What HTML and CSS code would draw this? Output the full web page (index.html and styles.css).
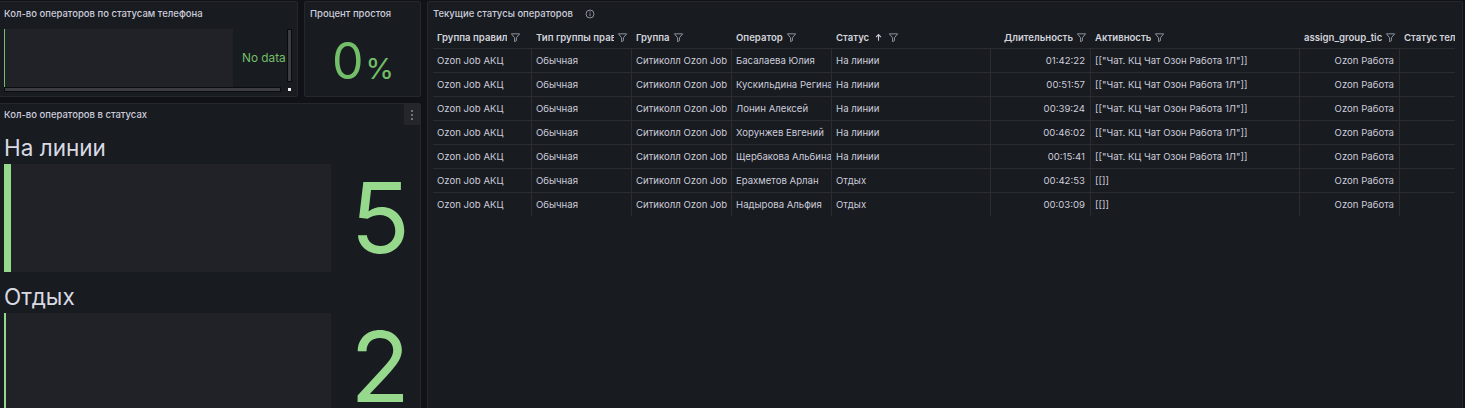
FILE: index.html
```html
<!DOCTYPE html>
<html lang="ru">
<head>
<meta charset="utf-8">
<title>Dashboard</title>
<link rel="stylesheet" href="styles.css">
</head>
<body>
<div class="dashboard">
  <div class="left-col">
    <div class="top-row">
      <section class="panel panel-phone">
        <header class="panel-header"><h2 class="panel-title">Кол-во операторов по статусам телефона</h2></header>
        <div class="scroll-box">
          <div class="scroll-content">
            <div class="mini-bar"></div>
            <span class="no-data">No data</span>
          </div>
          <div class="vscroll"></div>
          <div class="hscroll"></div>
          <div class="corner"></div>
        </div>
      </section>
      <section class="panel panel-idle">
        <header class="panel-header"><h2 class="panel-title">Процент простоя</h2></header>
        <div class="stat"><span class="stat-num">0</span><span class="stat-unit">%</span></div>
      </section>
    </div>
    <section class="panel panel-statuses">
      <header class="panel-header"><h2 class="panel-title">Кол-во операторов в статусах</h2></header>
      <button class="menu-btn" type="button" aria-label="Меню">
        <svg width="4" height="12" viewBox="0 0 4 12"><circle cx="2" cy="2" r="1" fill="#8e8e9e"/><circle cx="2" cy="6" r="1" fill="#8e8e9e"/><circle cx="2" cy="10" r="1" fill="#8e8e9e"/></svg>
      </button>
      <div class="gauges">
        <div class="gauge">
          <div class="gauge-label">На линии</div>
          <div class="gauge-row">
            <div class="gauge-bar"><div class="gauge-fill" style="width:7px"></div></div>
            <div class="gauge-value">5</div>
          </div>
        </div>
        <div class="gauge">
          <div class="gauge-label">Отдых</div>
          <div class="gauge-row">
            <div class="gauge-bar"><div class="gauge-fill" style="width:2px"></div></div>
            <div class="gauge-value">2</div>
          </div>
        </div>
      </div>
    </section>
  </div>

  <section class="panel panel-table">
    <header class="panel-header">
      <h2 class="panel-title">Текущие статусы операторов</h2>
      <svg class="info-icon" width="10" height="10" viewBox="0 0 10 10"><circle cx="5" cy="5" r="4" fill="none" stroke="#8e8e9e" stroke-width="1"/><line x1="5" y1="4.3" x2="5" y2="7.2" stroke="#8e8e9e" stroke-width="1"/><circle cx="5" cy="2.9" r="0.6" fill="#8e8e9e"/></svg>
    </header>
    <div class="table-wrap">
      <div class="table">
        <div class="thead">
          <div class="th"><span class="th-text">Группа правил</span><svg class="filter" viewBox="0 0 12 12"><path d="M1.5 2h9L7 6.3v3.2l-2 1V6.3z"/></svg></div>
          <div class="th"><span class="th-text">Тип группы правил</span><svg class="filter" viewBox="0 0 12 12"><path d="M1.5 2h9L7 6.3v3.2l-2 1V6.3z"/></svg></div>
          <div class="th"><span class="th-text">Группа</span><svg class="filter" viewBox="0 0 12 12"><path d="M1.5 2h9L7 6.3v3.2l-2 1V6.3z"/></svg></div>
          <div class="th"><span class="th-text">Оператор</span><svg class="filter" viewBox="0 0 12 12"><path d="M1.5 2h9L7 6.3v3.2l-2 1V6.3z"/></svg></div>
          <div class="th"><span class="th-text">Статус</span><svg class="sort" viewBox="0 0 10 10"><path d="M5 8.5V2M2.3 4.5L5 1.8l2.7 2.7"/></svg><svg class="filter" viewBox="0 0 12 12"><path d="M1.5 2h9L7 6.3v3.2l-2 1V6.3z"/></svg></div>
          <div class="th th-right"><span class="th-text">Длительность</span><svg class="filter" viewBox="0 0 12 12"><path d="M1.5 2h9L7 6.3v3.2l-2 1V6.3z"/></svg></div>
          <div class="th"><span class="th-text">Активность</span><svg class="filter" viewBox="0 0 12 12"><path d="M1.5 2h9L7 6.3v3.2l-2 1V6.3z"/></svg></div>
          <div class="th"><span class="th-text">assign_group_ticket</span><svg class="filter" viewBox="0 0 12 12"><path d="M1.5 2h9L7 6.3v3.2l-2 1V6.3z"/></svg></div>
          <div class="th"><span class="th-text">Статус телефона</span></div>
        </div>

        <div class="tr"><div class="td">Ozon Job АКЦ</div><div class="td">Обычная</div><div class="td">Ситиколл Ozon Job</div><div class="td">Басалаева Юлия</div><div class="td">На линии</div><div class="td td-right">01:42:22</div><div class="td">[["Чат. КЦ Чат Озон Работа 1Л"]]</div><div class="td td-right">Ozon Работа</div><div class="td"></div></div>
        <div class="tr"><div class="td">Ozon Job АКЦ</div><div class="td">Обычная</div><div class="td">Ситиколл Ozon Job</div><div class="td">Кускильдина Регина</div><div class="td">На линии</div><div class="td td-right">00:51:57</div><div class="td">[["Чат. КЦ Чат Озон Работа 1Л"]]</div><div class="td td-right">Ozon Работа</div><div class="td"></div></div>
        <div class="tr"><div class="td">Ozon Job АКЦ</div><div class="td">Обычная</div><div class="td">Ситиколл Ozon Job</div><div class="td">Лонин Алексей</div><div class="td">На линии</div><div class="td td-right">00:39:24</div><div class="td">[["Чат. КЦ Чат Озон Работа 1Л"]]</div><div class="td td-right">Ozon Работа</div><div class="td"></div></div>
        <div class="tr"><div class="td">Ozon Job АКЦ</div><div class="td">Обычная</div><div class="td">Ситиколл Ozon Job</div><div class="td">Хорунжев Евгений</div><div class="td">На линии</div><div class="td td-right">00:46:02</div><div class="td">[["Чат. КЦ Чат Озон Работа 1Л"]]</div><div class="td td-right">Ozon Работа</div><div class="td"></div></div>
        <div class="tr"><div class="td">Ozon Job АКЦ</div><div class="td">Обычная</div><div class="td">Ситиколл Ozon Job</div><div class="td">Щербакова Альбина</div><div class="td">На линии</div><div class="td td-right">00:15:41</div><div class="td">[["Чат. КЦ Чат Озон Работа 1Л"]]</div><div class="td td-right">Ozon Работа</div><div class="td"></div></div>
        <div class="tr"><div class="td">Ozon Job АКЦ</div><div class="td">Обычная</div><div class="td">Ситиколл Ozon Job</div><div class="td">Ерахметов Арлан</div><div class="td">Отдых</div><div class="td td-right">00:42:53</div><div class="td">[[]]</div><div class="td td-right">Ozon Работа</div><div class="td"></div></div>
        <div class="tr"><div class="td">Ozon Job АКЦ</div><div class="td">Обычная</div><div class="td">Ситиколл Ozon Job</div><div class="td">Надырова Альфия</div><div class="td">Отдых</div><div class="td td-right">00:03:09</div><div class="td">[[]]</div><div class="td td-right">Ozon Работа</div><div class="td"></div></div>
      </div>
    </div>
  </section>
</div>
</body>
</html>
```

FILE: styles.css
```css
* { box-sizing: border-box; }

html, body {
  margin: 0;
  padding: 0;
  background: #111217;
  overflow: hidden;
  font-family: "Inter", "Noto Sans", sans-serif;
  color: #ccccdc;
}

.dashboard {
  display: flex;
  gap: 6px;
  margin-left: -2px;
  padding-top: 1px;
  height: 430px;
  width: 1465px;
}

.left-col {
  width: 423px;
  flex: none;
  display: flex;
  flex-direction: column;
  gap: 6px;
}

.top-row {
  display: flex;
  gap: 6px;
  height: 96px;
  flex: none;
}

.panel {
  position: relative;
  background: #181b1f;
  border: 1px solid #25272d;
  border-radius: 2px;
  padding: 0 4px 0 5px;
  display: flex;
  flex-direction: column;
  overflow: hidden;
}

.panel-header {
  height: 22px;
  flex: none;
  display: flex;
  align-items: center;
  gap: 12px;
}

.panel-title {
  margin: 0;
  font-size: 9.5px;
  font-weight: 500;
  color: #ccccdc;
  white-space: nowrap;
}

/* panel 1 */
.panel-phone { width: 300px; }

.scroll-box {
  margin-top: 5px;
  display: grid;
  grid-template-columns: 283px 5px;
  grid-template-rows: 58px 5px;
}

.scroll-content {
  display: flex;
  align-items: center;
  overflow: hidden;
}

.mini-bar {
  width: 229px;
  height: 58px;
  flex: none;
  background: #202227;
  border-left: 1px solid #73bf69;
}

.no-data {
  margin-left: 9px;
  font-size: 11.8px;
  color: #73bf69;
  white-space: nowrap;
}

.vscroll {
  width: 5px;
  height: 53px;
  background: #3b3d43;
  border: 1px solid #0a0b0d;
}

.hscroll {
  width: 277px;
  height: 5px;
  background: #3b3d43;
  border: 1px solid #0a0b0d;
}

.corner {
  width: 5px;
  height: 5px;
  background: #f2f2f2;
  border: 1px solid #1a1a1a;
}

/* panel 2 */
.panel-idle { width: 117px; }

.stat {
  flex: 1;
  display: flex;
  align-items: baseline;
  justify-content: center;
  padding-top: 2px;
  color: #73bf69;
  align-content: center;
  flex-wrap: wrap;
}

.stat-num {
  font-size: 50px;
  line-height: 52px;
  font-weight: 400;
}

.stat-unit {
  font-size: 29px;
  margin-left: 2px;
}

/* panel 3 */
.panel-statuses {
  flex: 1;
}

.panel-statuses .panel-header { height: 20px; }

.menu-btn {
  position: absolute;
  top: 0;
  right: 0;
  width: 16px;
  height: 21px;
  padding: 0;
  border: 0;
  background: #24262b;
  display: flex;
  align-items: center;
  justify-content: center;
}

.gauges {
  margin-top: 7px;
  display: flex;
  flex-direction: column;
  gap: 8px;
}

.gauge-label {
  height: 33px;
  font-size: 22.5px;
  line-height: 33px;
  color: #d8d9e2;
}

.gauge-row {
  display: flex;
  height: 108px;
}

.gauge-bar {
  width: 327px;
  flex: none;
  background: #202227;
  display: flex;
}

.gauge-fill {
  height: 100%;
  background: #96d98d;
}

.gauge-value {
  flex: 1;
  text-align: right;
  padding-right: 6px;
  font-size: 98px;
  line-height: 108px;
  color: #96d98d;
}

/* table panel */
.panel-table {
  flex: 1;
  padding-right: 7px;
}

.info-icon { flex: none; margin-top: 1px; }

.table-wrap {
  margin-top: 2px;
  overflow: hidden;
  width: 100%;
}

.table {
  display: grid;
  grid-template-columns: 99px 100px 100px 100px 159px 100px 209px 100px 100px;
  font-size: 9.6px;
}

.thead, .tr { display: contents; }

.th {
  height: 22px;
  display: flex;
  align-items: center;
  gap: 3px;
  padding: 0 4px;
  font-weight: 600;
  color: #d2d3dc;
  overflow: hidden;
  white-space: nowrap;
}

.th-right { justify-content: flex-end; }

.th-text {
  overflow: hidden;
  white-space: nowrap;
  flex: 0 1 auto;
  min-width: 0;
}

.filter {
  width: 11px;
  height: 11px;
  flex: none;
  fill: none;
  stroke: #9a9ba6;
  stroke-width: 1;
  stroke-linejoin: round;
}

.sort {
  width: 9px;
  height: 9px;
  flex: none;
  fill: none;
  stroke: #ccccdc;
  stroke-width: 1.2;
  margin: 0 2px 0 2px;
}

.td {
  height: 24px;
  border-top: 1px solid #2a2c31;
  border-right: 1px solid #2a2c31;
  padding: 0 4px 0 4px;
  display: flex;
  align-items: center;
  white-space: nowrap;
  overflow: hidden;
  color: #ccccdc;
}

.td-right { justify-content: flex-end; padding-right: 5px; }
```
